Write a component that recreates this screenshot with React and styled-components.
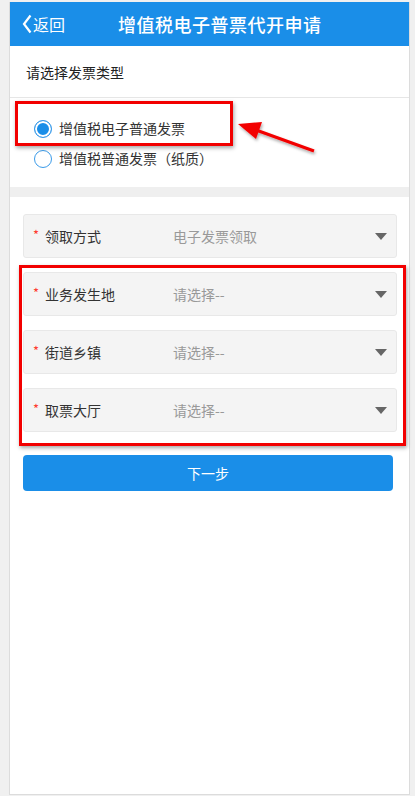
import React, { useState } from 'react'
import styled, { createGlobalStyle } from 'styled-components'

const GlobalStyle = createGlobalStyle`
  html, body {
    margin: 0;
    padding: 0;
    background: #f0f0f0;
    font-family: "Noto Sans CJK SC", "Noto Sans", sans-serif;
  }
`

const Frame = styled.div`
  position: relative;
  box-sizing: border-box;
  margin: 2px 5px 0 9px;
  height: 793px;
  background: #fff;
  border: 1px solid #dcdcdc;
  border-top: none;
  display: flex;
  flex-direction: column;
`

const Header = styled.header`
  height: 44px;
  background: #1a8ee8;
  color: #fff;
  display: flex;
  align-items: center;
`

const Back = styled.div`
  display: flex;
  align-items: center;
  gap: 1px;
  padding-left: 12px;
  font-size: 16px;
  width: 96px;
`

const HeaderTitle = styled.h1`
  margin: 0;
  font-size: 18px;
  font-weight: 500;
  letter-spacing: 0.5px;
`

const SectionTitle = styled.div`
  height: 51px;
  display: flex;
  align-items: center;
  padding-left: 16px;
  font-size: 14px;
  color: #222;
  border-bottom: 1px solid #e6e6e6;
`

const RadioGroup = styled.div`
  padding: 21px 0 19px 24px;
  display: flex;
  flex-direction: column;
  gap: 11px;
  border-bottom: 10px solid #efefef;
`

const RadioRow = styled.label`
  display: flex;
  align-items: center;
  gap: 7px;
  font-size: 14px;
  line-height: 19px;
  color: #333;
  height: 19px;
  cursor: pointer;
`

const RadioDot = styled.span`
  box-sizing: border-box;
  width: 18px;
  height: 18px;
  border-radius: 50%;
  border: 1px solid #3b9be9;
  background: ${({ checked }) => (checked ? '#1a8ee8' : '#fff')};
  box-shadow: ${({ checked }) => (checked ? 'inset 0 0 0 2px #fff' : 'none')};
`

const Form = styled.div`
  padding: 17px 12px 0 13px;
  display: flex;
  flex-direction: column;
  gap: 14px;
`

const Field = styled.div`
  box-sizing: border-box;
  height: 44px;
  background: #f4f4f4;
  border: 1px solid #e8e8e8;
  border-radius: 3px;
  display: flex;
  align-items: center;
  padding: 0 9px 0 9px;
  font-size: 14px;
`

const Star = styled.span`
  color: #ff3b30;
  width: 12px;
  font-size: 13px;
  margin-top: -3px;
`

const Label = styled.span`
  width: 128px;
  color: #333;
`

const Value = styled.span`
  flex: 1;
  color: #999;
`

const Caret = styled.span`
  width: 0;
  height: 0;
  border-left: 6px solid transparent;
  border-right: 6px solid transparent;
  border-top: 7px solid #666;
`

const NextButton = styled.button`
  margin: 23px 16px 0 13px;
  height: 36px;
  border: none;
  border-radius: 4px;
  background: #1a8ee8;
  color: #fff;
  font-family: inherit;
  font-size: 14px;
`

const Callout = styled.div`
  position: absolute;
  box-sizing: border-box;
  border: 3px solid #f20000;
  box-shadow: 1px 2px 4px rgba(0, 0, 0, 0.35);
  pointer-events: none;
  left: ${({ x }) => x}px;
  top: ${({ y }) => y}px;
  width: ${({ w }) => w}px;
  height: ${({ h }) => h}px;
`

const Arrow = styled.svg`
  position: absolute;
  left: 224px;
  top: 115px;
  overflow: visible;
  pointer-events: none;
`

const fields = [
  { label: '领取方式', value: '电子发票领取' },
  { label: '业务发生地', value: '请选择--' },
  { label: '街道乡镇', value: '请选择--' },
  { label: '取票大厅', value: '请选择--' },
]

const types = ['增值税电子普通发票', '增值税普通发票（纸质）']

export default function App() {
  const [type, setType] = useState(0)

  return (
    <>
      <GlobalStyle />
      <Frame>
        <Header>
          <Back>
            <svg width="10" height="20" viewBox="0 0 10 20">
              <path d="M8.5 1.5 L2 10 L8.5 18.5" fill="none" stroke="#fff" strokeWidth="2.2" />
            </svg>
            返回
          </Back>
          <HeaderTitle>增值税电子普票代开申请</HeaderTitle>
        </Header>

        <SectionTitle>请选择发票类型</SectionTitle>

        <RadioGroup>
          {types.map((t, i) => (
            <RadioRow key={t} onClick={() => setType(i)}>
              <RadioDot checked={type === i} />
              {t}
            </RadioRow>
          ))}
        </RadioGroup>

        <Form>
          {fields.map((f) => (
            <Field key={f.label}>
              <Star>*</Star>
              <Label>{f.label}</Label>
              <Value>{f.value}</Value>
              <Caret />
            </Field>
          ))}
        </Form>

        <NextButton>下一步</NextButton>

        <Callout x={5} y={99} w={218} h={45} />
        <Callout x={9} y={263} w={387} h={181} />
        <Arrow width="90" height="40">
          <defs>
            <filter id="sh" x="-20%" y="-50%" width="150%" height="250%">
              <feDropShadow dx="1" dy="2" stdDeviation="1.5" floodOpacity="0.35" />
            </filter>
          </defs>
          <g filter="url(#sh)">
            <line x1="80" y1="34" x2="22" y2="13" stroke="#f20000" strokeWidth="3" />
            <polygon points="4,7 28,5 22,22" fill="#f20000" />
          </g>
        </Arrow>
      </Frame>
    </>
  )
}
